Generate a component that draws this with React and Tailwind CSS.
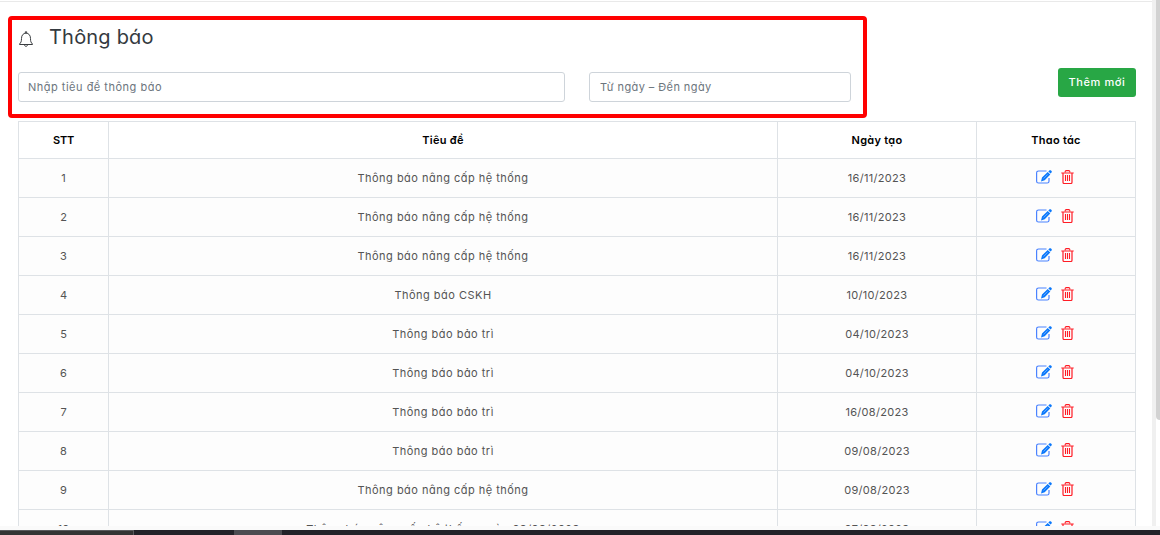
const rows = [
  ['1', 'Thông báo nâng cấp hệ thống', '16/11/2023'],
  ['2', 'Thông báo nâng cấp hệ thống', '16/11/2023'],
  ['3', 'Thông báo nâng cấp hệ thống', '16/11/2023'],
  ['4', 'Thông báo CSKH', '10/10/2023'],
  ['5', 'Thông báo bảo trì', '04/10/2023'],
  ['6', 'Thông báo bảo trì', '04/10/2023'],
  ['7', 'Thông báo bảo trì', '16/08/2023'],
  ['8', 'Thông báo bảo trì', '09/08/2023'],
  ['9', 'Thông báo nâng cấp hệ thống', '09/08/2023'],
  ['10', 'Thông báo nâng cấp hệ thống ngày 08/08/2023', '07/08/2023'],
];

const columns = 'grid grid-cols-[90px_669px_199px_159px]';

function BellIcon() {
  return (
    <svg className="h-4 w-[14px]" viewBox="0 0 14 16" fill="none" stroke="#3a3d40" strokeWidth="1">
      <path d="M.5 13.5V13C2 11.6 2.5 10.5 2.5 7.5C2.5 4.2 4.3 2.2 7 2.2s4.5 2 4.5 5.3c0 3 .5 4.1 2 5.5v.5H.5z" />
      <path d="M5.5 13.7c0 2.2 3 2.2 3 0M6.3 2V.8h1.4V2" />
    </svg>
  );
}

function EditIcon() {
  return (
    <svg className="h-[14px] w-4" viewBox="0 0 16 14" fill="none">
      <path d="M10.5 1H2.5Q.6 1 .6 2.8v8.4Q.6 13 2.5 13h8.7q1.8 0 1.8-1.8V8" stroke="#4b83ff" strokeWidth="1.2" />
      <path d="M5 11.4l1-3.9 5.7-5.5 2.6 2.5-5.6 5.7-3.7 1.2zM12.3 1.6l1-1c.6-.6 1.2-.6 1.7-.1l.5.5c.5.5.5 1.1 0 1.6l-.9 1-2.3-2z" fill="#0b78fb" />
      <path d="M7.6 8.5l4.1-4.1" stroke="#91c1ff" strokeWidth=".7" />
    </svg>
  );
}

function TrashIcon() {
  return (
    <svg className="h-[14px] w-[13px]" viewBox="0 0 13 14" fill="none" stroke="#ff1c25">
      <path d="M.3 3h12.4M2 3v9.2q0 1.3 1.2 1.3h6.6q1.2 0 1.2-1.3V3" strokeWidth="1.2" />
      <path d="M4.2 2.5V1.6q0-1 1-1h2.6q1 0 1 1v.9M4.5 5v6M6.5 5v6M8.5 5v6" strokeWidth="1.1" />
    </svg>
  );
}

export default function App() {
  return (
    <div className="relative flex h-[535px] w-[1160px] flex-col overflow-hidden bg-white font-['Inter','Open_Sans',sans-serif] text-[11px] text-[#545454] [font-feature-settings:'cv11']">
      <div className="flex h-[526px] overflow-hidden">
        <main className="w-[1152px] shrink-0 overflow-hidden">
          <div className="h-[2px] border-b border-[#e9e9e9]" />
          <header className="flex h-[70px] items-start pl-[19px]">
            <div className="pt-[29px]"><BellIcon /></div>
            <h1 className="ml-4 pt-[20px] text-[20px] leading-[30px] tracking-[0.2px] text-[#343a40]">Thông báo</h1>
          </header>
          <div className="flex h-[49px] items-start pl-[18px]">
            <div className="flex h-[30px] w-[547px] items-center rounded-[3px] border border-[#ced4da] pl-[9px] tracking-[0.5px] text-[#6c757d]"><span>Nhập tiêu đề thông báo</span></div>
            <div className="ml-6 flex h-[30px] w-[262px] items-center rounded-[3px] border border-[#ced4da] pl-[10px] tracking-[0.42px] text-[#6c757d]"><span>Từ ngày – Đến ngày</span></div>
            <button className="-mt-1 ml-[207px] h-[29px] w-[78px] rounded-[3px] bg-[#28a745] font-medium tracking-[0.6px] text-white"><span>Thêm mới</span></button>
          </div>
          <div className="ml-[18px] w-[1118px] border-t border-l border-[#dee2e6]">
            <div className={columns + ' h-[37px] text-center leading-[36px] font-semibold text-black'}>
              {['STT', 'Tiêu đề', 'Ngày tạo', 'Thao tác'].map((label) => (
                <div key={label} className="border-r border-b border-[#dee2e6] tracking-[0.28px] first:tracking-[-0.2px]"><span>{label}</span></div>
              ))}
            </div>
            {rows.map(([id, title, date]) => (
              <div key={id} className={columns + ' h-[39px] bg-[#fdfdfd] text-center leading-[38px]'}>
                <div className="border-r border-b border-[#dee2e6]"><span>{id}</span></div>
                <div className="border-r border-b border-[#dee2e6] tracking-[0.48px]"><span>{title}</span></div>
                <div className="border-r border-b border-[#dee2e6] tracking-[0.3px]"><span>{date}</span></div>
                <div className="flex items-start justify-center gap-[9px] border-r border-b border-[#dee2e6] pt-[11px] pr-[2px]">
                  <EditIcon />
                  <TrashIcon />
                </div>
              </div>
            ))}
          </div>
        </main>
        <div className="w-1 bg-[#f0f0f0]" />
        <div className="w-1"><div className="h-[420px] rounded-bl bg-[#d2d2d2]" /></div>
      </div>
      <div className="h-1 bg-[#fafafa]" />
      <div className="flex h-[5px] bg-[#222228]">
        <div className="w-[134px] border-t border-r border-[#59595c] bg-[#333333]" />
        <div className="ml-[100px] w-12 bg-[#4c4c51]" />
      </div>
      <div className="pointer-events-none absolute top-4 left-2 h-[102px] w-[859px] rounded border-4 border-[#ff0000]" />
    </div>
  );
}
